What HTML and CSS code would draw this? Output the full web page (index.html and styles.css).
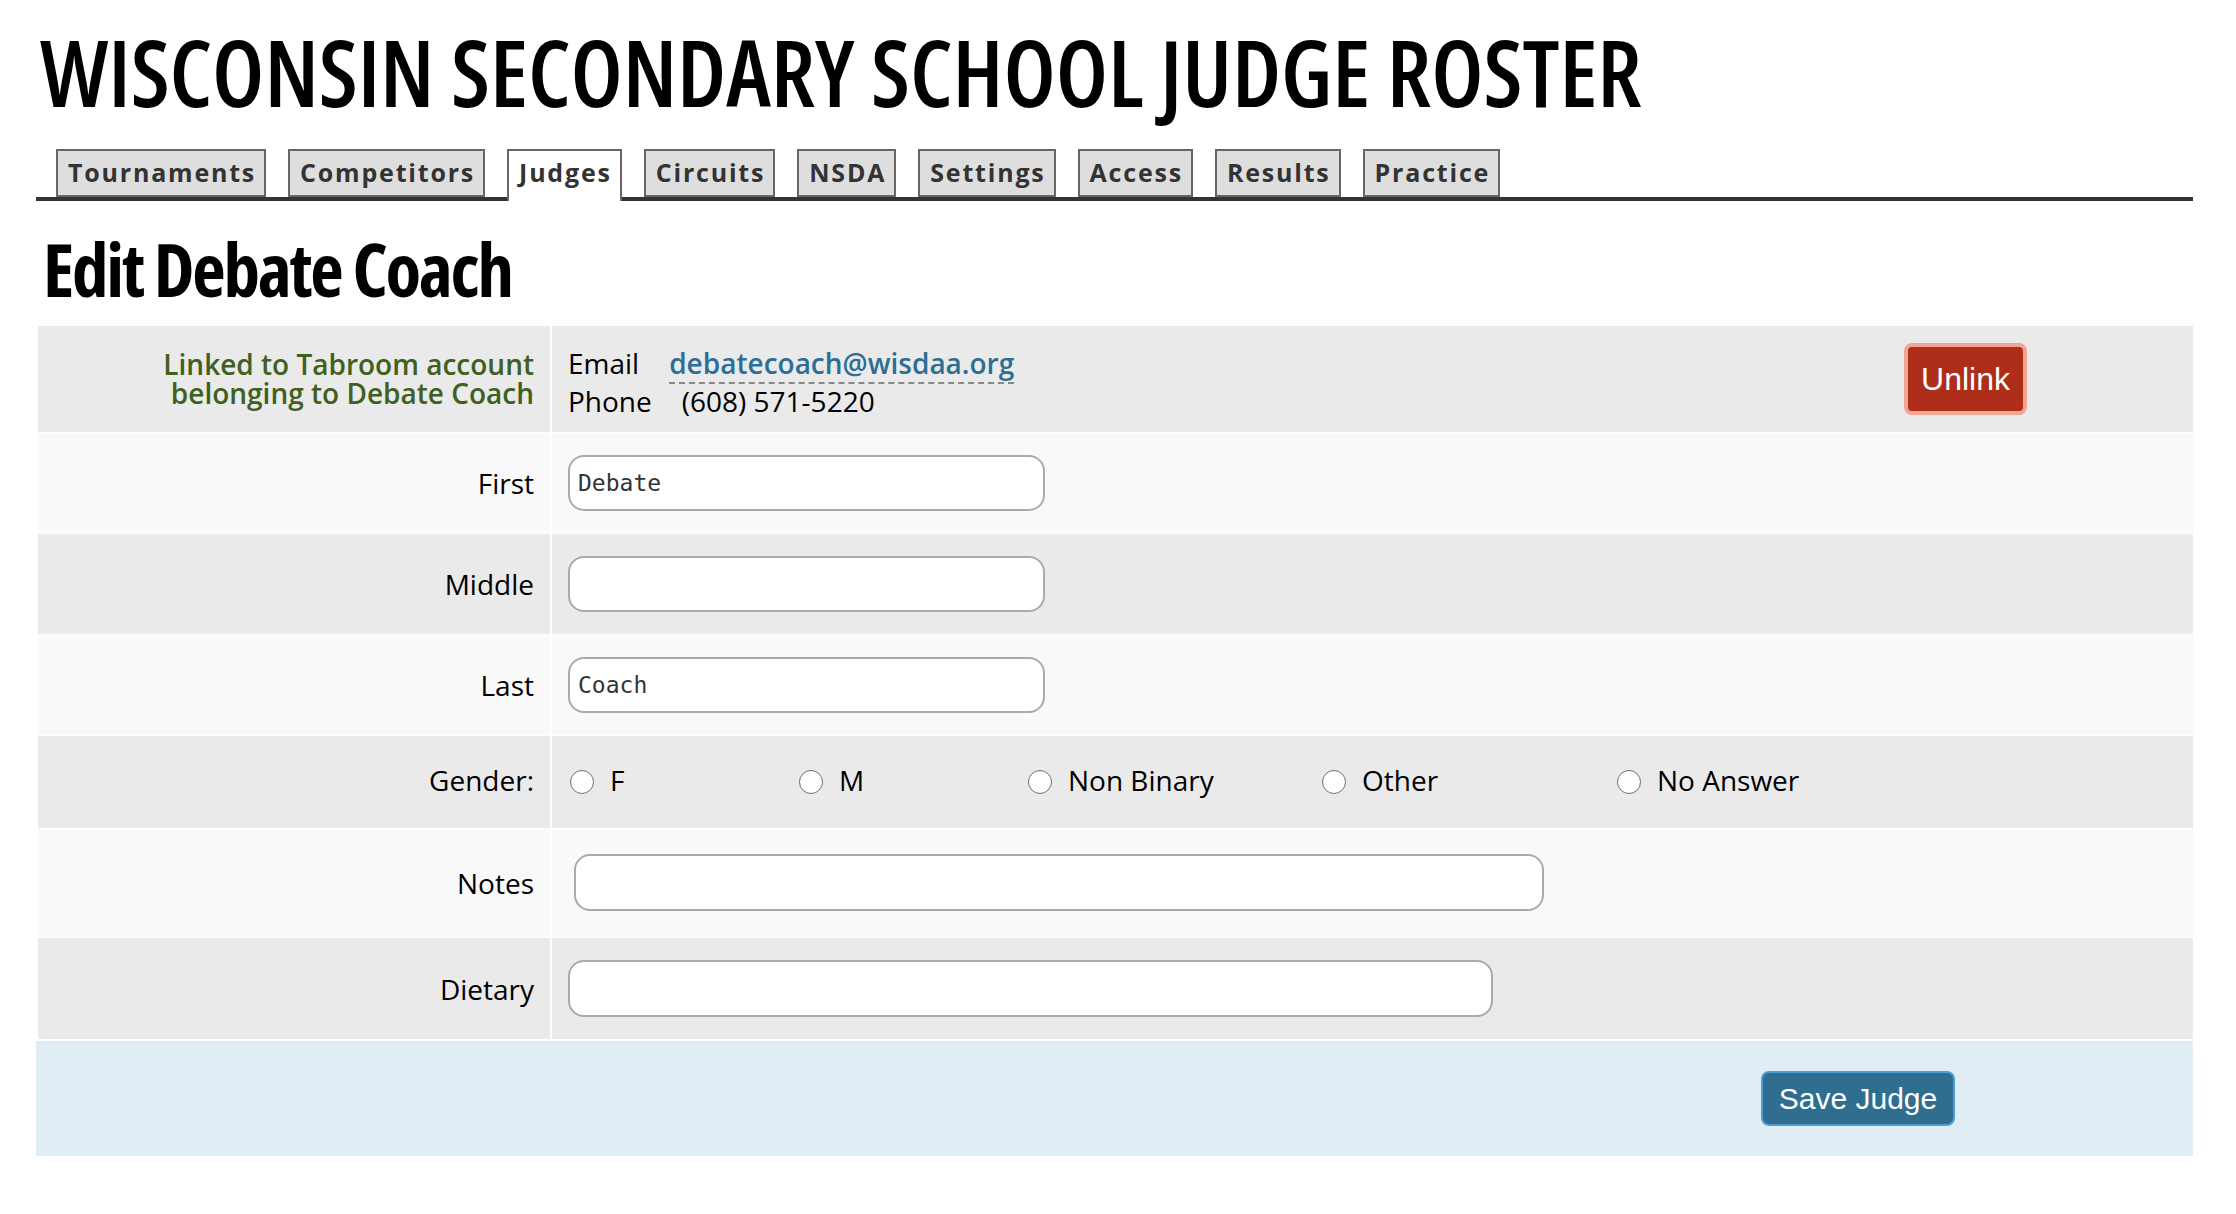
FILE: index.html
```html
<!DOCTYPE html>
<html lang="en">
<head>
<meta charset="utf-8">
<title>Edit Debate Coach</title>
<link rel="stylesheet" href="styles.css">
</head>
<body>
<div class="page">
  <h1 class="site-title">WISCONSIN SECONDARY SCHOOL JUDGE ROSTER</h1>
  <nav class="tabs">
    <a class="tab">Tournaments</a>
    <a class="tab">Competitors</a>
    <a class="tab active">Judges</a>
    <a class="tab">Circuits</a>
    <a class="tab">NSDA</a>
    <a class="tab">Settings</a>
    <a class="tab">Access</a>
    <a class="tab">Results</a>
    <a class="tab">Practice</a>
  </nav>

  <h2 class="page-title">Edit Debate Coach</h2>

  <div class="form">
    <div class="row odd">
      <div class="label green">Linked to Tabroom account<br>belonging to Debate Coach</div>
      <div class="value link-value">
        <div class="contact">
          <div><span class="ckey">Email</span><a class="mail">debatecoach@wisdaa.org</a></div>
          <div><span class="ckey">Phone</span><span>(608) 571-5220</span></div>
        </div>
        <button class="btn-unlink">Unlink</button>
      </div>
    </div>

    <div class="row even">
      <div class="label">First</div>
      <div class="value"><input class="field short" type="text" value="Debate"></div>
    </div>

    <div class="row odd">
      <div class="label">Middle</div>
      <div class="value"><input class="field short" type="text" value=""></div>
    </div>

    <div class="row even">
      <div class="label">Last</div>
      <div class="value"><input class="field short" type="text" value="Coach"></div>
    </div>

    <div class="row odd gender-row">
      <div class="label">Gender:</div>
      <div class="value radios">
        <label class="opt o1"><input type="radio" name="g"><span>F</span></label>
        <label class="opt o2"><input type="radio" name="g"><span>M</span></label>
        <label class="opt o3"><input type="radio" name="g"><span>Non Binary</span></label>
        <label class="opt o4"><input type="radio" name="g"><span>Other</span></label>
        <label class="opt"><input type="radio" name="g"><span>No Answer</span></label>
      </div>
    </div>

    <div class="row even notes-row">
      <div class="label">Notes</div>
      <div class="value"><input class="field notes" type="text" value=""></div>
    </div>

    <div class="row odd">
      <div class="label">Dietary</div>
      <div class="value"><input class="field dietary" type="text" value=""></div>
    </div>
  </div>

  <div class="libl">
    <button class="btn-save">Save Judge</button>
  </div>
</div>
</body>
</html>
```

FILE: styles.css
```css
* { box-sizing: border-box; }

body {
  margin: 0;
  background: #ffffff;
  font-family: "Open Sans", "Noto Sans", sans-serif;
  color: #000;
}

.page {
  padding: 0 43px 0 36px;
}

.site-title {
  margin: 26px 0 0 4px;
  font-family: "Open Sans", sans-serif;
  font-stretch: 75%;
  font-weight: 600;
  font-size: 92px;
  line-height: 91px;
  letter-spacing: -0.1px;
  color: #000;
  white-space: nowrap;
}

.tabs {
  display: flex;
  align-items: flex-end;
  gap: 22px;
  margin-top: 32px;
  padding-left: 20px;
  border-bottom: 4px solid #333;
}

.tab {
  display: block;
  padding: 4px 8px 6px 10px;
  border: 2px solid #666;
  background: #dedede;
  color: #333;
  font-weight: 700;
  font-size: 25px;
  line-height: 34px;
  letter-spacing: 1.8px;
}

.tab.active {
  background: #fff;
  border-bottom: 0;
  padding-bottom: 12px;
  margin-bottom: -4px;
}

.page-title {
  margin: 31px 0 21px 7px;
  font-family: "Open Sans", sans-serif;
  font-stretch: 75%;
  font-weight: 700;
  font-size: 73px;
  line-height: 73px;
  letter-spacing: -2.2px;
}

.form {
  margin-left: 2px;
  display: flex;
  flex-direction: column;
  gap: 1px;
}

.row {
  display: grid;
  grid-template-columns: 512px 1fr;
  column-gap: 2px;
}

.row.odd > div { background: #eaeaea; }
.row.even > div { background: #f9f9f9; }

.label {
  display: flex;
  align-items: center;
  justify-content: flex-end;
  text-align: right;
  padding-right: 16px;
  font-size: 28px;
  line-height: 38px;
}

.label.green {
  color: #3f6020;
  font-weight: 600;
  font-size: 28px;
  line-height: 29px;
}

.value {
  display: flex;
  align-items: center;
  padding: 22px 16px;
  font-size: 28px;
  line-height: 38px;
}

.link-value {
  padding-top: 18px;
  padding-bottom: 12px;
  justify-content: space-between;
}

.ckey {
  margin-right: 30px;
}

.mail {
  color: #2e6e96;
  font-weight: 600;
  text-decoration: none;
  border-bottom: 2px dashed #888;
}

.btn-unlink {
  margin-right: 150px;
  margin-top: -6px;
  width: 123px;
  height: 72px;
  border: 4px solid #f3a594;
  border-radius: 8px;
  background: #ae2e1a;
  color: #fff;
  font-family: "Liberation Sans", Arial, sans-serif;
  font-size: 32px;
  padding: 0;
}

.field {
  height: 56px;
  border: 2px solid #aaa;
  border-radius: 16px;
  background: #fff;
  padding: 0 8px;
  font-family: "DejaVu Sans Mono", monospace;
  font-size: 23px;
  color: #333;
  outline: none;
}

.field.short { width: 477px; }
.field.notes { width: 970px; height: 57px; margin-left: 6px; }
.field.dietary { width: 925px; height: 57px; }

.notes-row .value { padding-top: 25px; padding-bottom: 26px; }
.gender-row .value { padding-top: 25px; padding-bottom: 29px; }
.gender-row .label { padding-bottom: 4px; }

.radios { padding-left: 18px; }

.opt {
  display: flex;
  align-items: center;
  gap: 16px;
}
.o1, .o2 { width: 229px; }
.o3 { width: 294px; }
.o4 { width: 295px; }

.opt input {
  appearance: none;
  -webkit-appearance: none;
  width: 24px;
  height: 24px;
  margin: 4px 0 0;
  border: 1.5px solid #6e6e6e;
  border-radius: 50%;
  background: #fff;
}

.libl {
  margin-top: 2px;
  height: 115px;
  background: #e1edf5;
  display: flex;
  align-items: center;
  justify-content: flex-end;
  padding-right: 238px;
}

.btn-save {
  width: 194px;
  height: 55px;
  border: 2px solid #4b9fd5;
  border-radius: 8px;
  background: #2f6e8f;
  color: #fff;
  font-family: "Liberation Sans", Arial, sans-serif;
  font-size: 30px;
  padding: 0;
}
```
